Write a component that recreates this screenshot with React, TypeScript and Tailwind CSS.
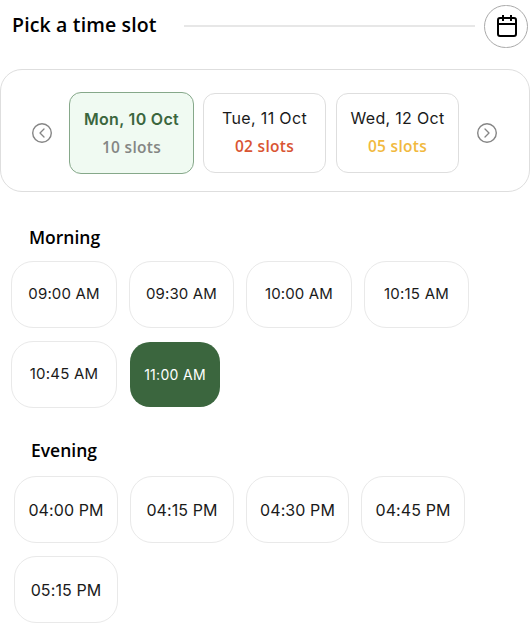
type DateOption = {
  day: string;
  slots: string;
  card: string;
  dayStyle: string;
  slotStyle: string;
};

type Slot = { time: string; box: string };

const dates: DateOption[] = [
  {
    day: "Mon, 10 Oct",
    slots: "10 slots",
    card: "w-[125px] h-[82px] border-[#86a88a] bg-[#f0faf2]",
    dayStyle: "font-semibold tracking-[0.3px] text-[#3b663e]",
    slotStyle: "text-[#848684]",
  },
  {
    day: "Tue, 11 Oct",
    slots: "02 slots",
    card: "ml-[9px] w-[123px] h-[80px] pb-[2px] border-[#dedede]",
    dayStyle: "tracking-[0.35px] text-[#1a1a1a]",
    slotStyle: "text-[#d95533]",
  },
  {
    day: "Wed, 12 Oct",
    slots: "05 slots",
    card: "ml-[10px] w-[123px] h-[80px] pb-[2px] border-[#dedede]",
    dayStyle: "tracking-[0.3px] text-[#1a1a1a]",
    slotStyle: "text-[#f1b93e]",
  },
];

const morning: Slot[] = [
  { time: "09:00 AM", box: "w-[106px] tracking-[0.15px]" },
  { time: "09:30 AM", box: "ml-3 w-[105px] tracking-[0.15px]" },
  { time: "10:00 AM", box: "ml-3 w-[106px] tracking-[0.15px]" },
  { time: "10:15 AM", box: "ml-3 w-[105px] tracking-[0.25px]" },
];

const evening: Slot[] = [
  { time: "04:00 PM", box: "w-[104px] tracking-[0.1px]" },
  { time: "04:15 PM", box: "ml-3 w-[104px] tracking-[0.1px]" },
  { time: "04:30 PM", box: "ml-3 w-[103px] tracking-[0.1px]" },
  { time: "04:45 PM", box: "ml-3 w-[104px] tracking-[0.1px]" },
];

function SlotButton({ time, box, text = "text-[15px]" }: Slot & { text?: string }) {
  return (
    <button
      className={`flex h-[67px] shrink-0 items-center justify-center rounded-[22px] border border-[#e9e9e9] text-[#1a1a1a] ${text} ${box}`}
    >
      <span className="whitespace-nowrap">{time}</span>
    </button>
  );
}

function Arrow({ points }: { points: string }) {
  return (
    <svg width="20" height="20" viewBox="0 0 20 20" fill="none" stroke="#858585" className="shrink-0">
      <circle cx="10" cy="10" r="9.3" strokeWidth="1.4" />
      <polyline points={points} strokeWidth="1.3" strokeLinecap="round" strokeLinejoin="round" />
    </svg>
  );
}

export default function App() {
  return (
    <main className="h-[624px] w-[530px] overflow-hidden bg-white font-['Inter',sans-serif] text-black">
      <header className="flex h-[53px] items-center pl-3">
        <h1 className="w-[172px] whitespace-nowrap pb-[3px] font-['Open_Sans',sans-serif] text-[19.5px] font-semibold leading-6 tracking-[0.15px]">
          Pick a time slot
        </h1>
        <div className="mb-px h-[2px] w-[291px] bg-[#e7e7e7]" />
        <button className="ml-[9px] flex h-[43px] w-[44px] items-center justify-center rounded-full border border-[#aaaaaa] pb-px pl-[2px]">
          <svg width="20" height="22" viewBox="0 0 20 22" fill="none" stroke="black" strokeWidth="2">
            <rect x="1" y="3" width="18" height="18" rx="2" />
            <path d="M1 9h18M6 0v6M14 0v6" />
          </svg>
        </button>
      </header>

      <section className="mt-4 flex h-[123px] items-center rounded-[22px] border border-[#dedede] pl-[31px] pt-[4px]">
        <Arrow points="12,6 8,10 12,14" />
        <div className="ml-[17px] flex items-center">
          {dates.map((d) => (
            <button
              key={d.day}
              className={`flex shrink-0 flex-col items-center justify-center rounded-xl border ${d.card}`}
            >
              <span className={`whitespace-nowrap text-[16px] leading-7 ${d.dayStyle}`}>{d.day}</span>
              <span
                className={`whitespace-nowrap font-['Open_Sans',sans-serif] text-[15.5px] font-semibold leading-7 tracking-[0.3px] ${d.slotStyle}`}
              >
                {d.slots}
              </span>
            </button>
          ))}
        </div>
        <div className="ml-[18px] flex">
          <Arrow points="8,6 12,10 8,14" />
        </div>
      </section>

      <section className="pl-[11px] pt-[33px]">
        <h2 className="pl-[18px] font-['Open_Sans',sans-serif] text-[17.5px] font-semibold leading-6">
          Morning
        </h2>
        <div className="mt-3 flex">
          {morning.map((s) => (
            <SlotButton key={s.time} {...s} />
          ))}
        </div>
        <div className="mt-[13px] flex items-center">
          <SlotButton time="10:45 AM" box="w-[106px] tracking-[0.2px]" />
          <button className="ml-[13px] flex h-[65px] w-[90px] items-center justify-center rounded-[20px] bg-[#3b663e] text-[14px] tracking-[0.3px] text-white">
            <span className="whitespace-nowrap">11:00 AM</span>
          </button>
        </div>
      </section>

      <section className="pl-[14px] pt-[30px]">
        <h2 className="pl-[17px] font-['Open_Sans',sans-serif] text-[17.5px] font-semibold leading-6">
          Evening
        </h2>
        <div className="mt-[14px] flex">
          {evening.map((s) => (
            <SlotButton key={s.time} {...s} text="text-[16px]" />
          ))}
        </div>
        <div className="mt-[13px] flex">
          <SlotButton time="05:15 PM" box="w-[104px] tracking-[0.1px]" text="text-[16px]" />
        </div>
      </section>
    </main>
  );
}
